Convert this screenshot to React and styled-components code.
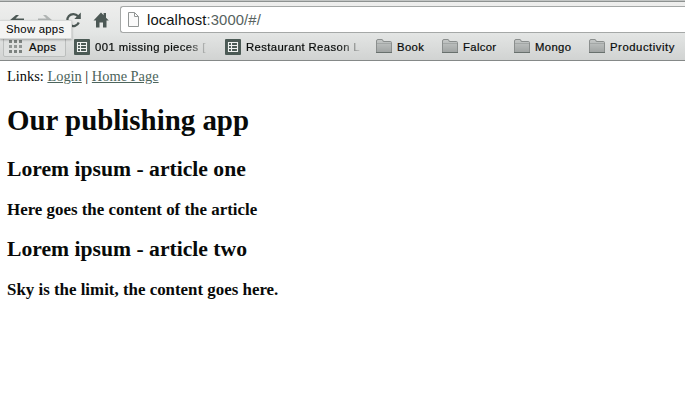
import React from 'react';
import styled, { createGlobalStyle } from 'styled-components';

const GlobalStyle = createGlobalStyle`
  * { box-sizing: border-box; }
  body { margin: 0; background: #fff; overflow: hidden; }
`;

const Window = styled.div`
  position: relative;
  width: 685px;
  height: 417px;
  overflow: hidden;
  background: #fff;
`;

const Chrome = styled.header`
  height: 61px;
  display: flex;
  flex-direction: column;
  background: linear-gradient(#efefee 0, #e4e6e5 32px, #d1d3d2 60px);
  border-bottom: 1px solid #858988;
  font-family: 'Liberation Sans', Arial, sans-serif;
`;

const TabEdge = styled.div`
  flex: none;
  height: 2px;
  background: #c3c6c5;
  border-bottom: 1px solid #8d9190;
`;

const Toolbar = styled.div`
  flex: none;
  display: flex;
  height: 32px;
  padding: 4px 0 0 7px;
`;

const NavIcon = styled.svg`
  display: block;
  flex: none;
  width: 18px;
  height: 18px;
  margin: 5px 10px 0 0;
  color: ${(p) => (p.$muted ? '#b0b4b3' : '#4c5855')};
`;

const AddressBar = styled.div`
  display: flex;
  align-items: center;
  flex: 1;
  height: 27px;
  margin-left: 1px;
  padding-left: 7px;
  background: #fff;
  border: 1px solid #a5a8a7;
  border-right: 0;
  border-radius: 3px 0 0 3px;
`;

const PageIcon = styled.svg`
  display: block;
  width: 11px;
  height: 15px;
  margin-right: 8px;
`;

const Address = styled.span`
  font-size: 14.8px;
  line-height: 18px;
  letter-spacing: 0.12px;
  color: #101413;
`;

const AddressTail = styled.span`
  color: #56625e;
`;

const Bookmarks = styled.nav`
  flex: none;
  display: flex;
  height: 26px;
  padding-left: 3px;
`;

const Bookmark = styled.div`
  flex: none;
  display: flex;
  align-items: center;
  width: ${(p) => p.$width}px;
  height: 26px;
`;

const AppsButton = styled.div`
  flex: none;
  display: flex;
  align-items: center;
  width: 63px;
  height: 20px;
  margin: 3px 8px 0 0;
  padding-left: 5px;
  background: #dfe1e0;
  border: 1px solid #bbbebd;
  border-radius: 2px;
`;

const MarkIcon = styled.svg`
  display: block;
  flex: none;
  width: 16px;
  height: 16px;
  margin-right: ${(p) => p.$gap ?? 5}px;
`;

const Label = styled.span`
  white-space: nowrap;
  font-size: 11.3px;
  line-height: 16px;
  letter-spacing: ${(p) => p.$track ?? 0.35}px;
  color: #080b0a;
  -webkit-text-stroke: 0.2px currentColor;
  ${(p) => p.$fade && 'mask-image: linear-gradient(to right, #000 82%, rgba(0, 0, 0, 0.12));'}
`;

const Tooltip = styled.div`
  position: absolute;
  left: 0;
  top: 20px;
  width: 72px;
  height: 19px;
  padding-left: 6px;
  background: #f4f4f3;
  border: 1px solid #d6d8d7;
  border-left: 0;
  box-shadow: 0 1px 2px rgba(0, 0, 0, 0.28);
  font: 11.3px/17px 'Liberation Sans', Arial, sans-serif;
  letter-spacing: 0.27px;
  color: #000;
`;

const Page = styled.main`
  display: flex;
  flex-direction: column;
  align-items: flex-start;
  padding: 6px 7px 0;
  font-family: 'Liberation Serif', 'Times New Roman', serif;
  color: #080a09;
`;

const Links = styled.div`
  height: 18px;
  font-size: 14.4px;
  line-height: 18px;
  white-space: nowrap;
`;

const Link = styled.a`
  color: #4d655c;
  text-decoration: underline;
  cursor: pointer;
`;

const Title = styled.h1`
  margin: 18px 0 0;
  font-size: 28.9px;
  line-height: 34px;
  white-space: nowrap;
`;

const ArticleTitle = styled.h2`
  margin: ${(p) => p.$gap}px 0 0;
  font-size: 21.65px;
  line-height: 26px;
  white-space: nowrap;
`;

const ArticleText = styled.h3`
  margin: 18px 0 0;
  font-size: 16.9px;
  line-height: 20px;
  white-space: nowrap;
`;

const Sheet = () => (
  <MarkIcon viewBox="0 0 16 16">
    <rect width="16" height="16" rx="1" fill="#4b5a55" />
    <path d="M3.5 3.5h9v9h-9zM3.5 6.5h9M3.5 9.5h9M6.5 3.5v9" fill="none" stroke="#f0f2f1" strokeWidth="1.1" />
  </MarkIcon>
);

const Folder = () => (
  <MarkIcon viewBox="0 0 16 16">
    <defs>
      <linearGradient id="folder" x2="0" y2="1">
        <stop stopColor="#c6c9c8" />
        <stop offset="1" stopColor="#9fa3a2" />
      </linearGradient>
    </defs>
    <path d="M.5 13.5V2q0-1.5 1.5-1.5h4q1 0 1.2 2h7q1.3 0 1.3 1v10z" fill="url(#folder)" stroke="#8a8e8d" />
    <path d="M1 4.5h14" stroke="#a3a7a6" />
    <path d="M0 13.5h16" stroke="#68706d" />
  </MarkIcon>
);

const Grid = () => (
  <MarkIcon viewBox="0 0 16 16" $gap={4}>
    {[0, 5, 10].map((y) =>
      [0, 5, 10].map((x) => (
        <rect key={`${x}-${y}`} x={x} y={y + 1} width="3" height="3" fill={y === 5 ? '#929795' : '#7c827f'} />
      )),
    )}
  </MarkIcon>
);

const folders = [
  { name: 'Book', width: 66 },
  { name: 'Falcor', width: 72 },
  { name: 'Mongo', width: 75 },
  { name: 'Productivity', width: 96, track: 0.55 },
];

const articles = [
  { title: 'Lorem ipsum - article one', text: 'Here goes the content of the article', gap: 19 },
  { title: 'Lorem ipsum - article two', text: 'Sky is the limit, the content goes here.', gap: 16 },
];

export default function App() {
  return (
    <Window>
      <GlobalStyle />
      <Chrome>
        <TabEdge />
        <Toolbar>
          <NavIcon viewBox="0 0 18 18">
            <path d="M17 7.5H8.5L12 4H9L2.5 9.5 8 15h3l-3.5-4H17z" fill="currentColor" />
          </NavIcon>
          <NavIcon viewBox="0 0 18 18" $muted>
            <path d="M3 7.5h8.5L8 4h3l6.5 5.5L12 15H9l3.5-4H3z" fill="currentColor" />
          </NavIcon>
          <NavIcon viewBox="0 0 18 18">
            <path d="M15.8 11.5A6 6 0 1 1 15 5.3" fill="none" stroke="currentColor" strokeWidth="2.3" />
            <path d="M17.8 1.5V8h-6.5z" fill="currentColor" />
          </NavIcon>
          <NavIcon viewBox="0 0 18 18">
            <path d="M2.5 9.5 10 1.5l2.6 2.7V2H15v4.7l2.8 2.8h-2.3v7H12v-5H8.5v5H5v-7z" fill="currentColor" />
          </NavIcon>
          <AddressBar>
            <PageIcon viewBox="0 0 11 15">
              <path d="M.5.5h6l4 4v10H.5zM6.5.5v4h4" fill="#fafafa" stroke="#929695" />
            </PageIcon>
            <Address>
              localhost<AddressTail>:3000/#/</AddressTail>
            </Address>
          </AddressBar>
        </Toolbar>
        <Bookmarks>
          <AppsButton>
            <Grid />
            <Label>Apps</Label>
          </AppsButton>
          <Bookmark $width={151}>
            <Sheet />
            <Label $fade $track={0.42}>001 missing pieces [</Label>
          </Bookmark>
          <Bookmark $width={151}>
            <Sheet />
            <Label $fade $track={0.38}>Restaurant Reason L</Label>
          </Bookmark>
          {folders.map((f) => (
            <Bookmark key={f.name} $width={f.width}>
              <Folder />
              <Label $track={f.track}>{f.name}</Label>
            </Bookmark>
          ))}
        </Bookmarks>
      </Chrome>
      <Page>
        <Links>
          Links: <Link>Login</Link> | <Link>Home Page</Link>
        </Links>
        <Title>Our publishing app</Title>
        {articles.map((a) => (
          <React.Fragment key={a.title}>
            <ArticleTitle $gap={a.gap}>{a.title}</ArticleTitle>
            <ArticleText>{a.text}</ArticleText>
          </React.Fragment>
        ))}
      </Page>
      <Tooltip>Show apps</Tooltip>
    </Window>
  );
}
